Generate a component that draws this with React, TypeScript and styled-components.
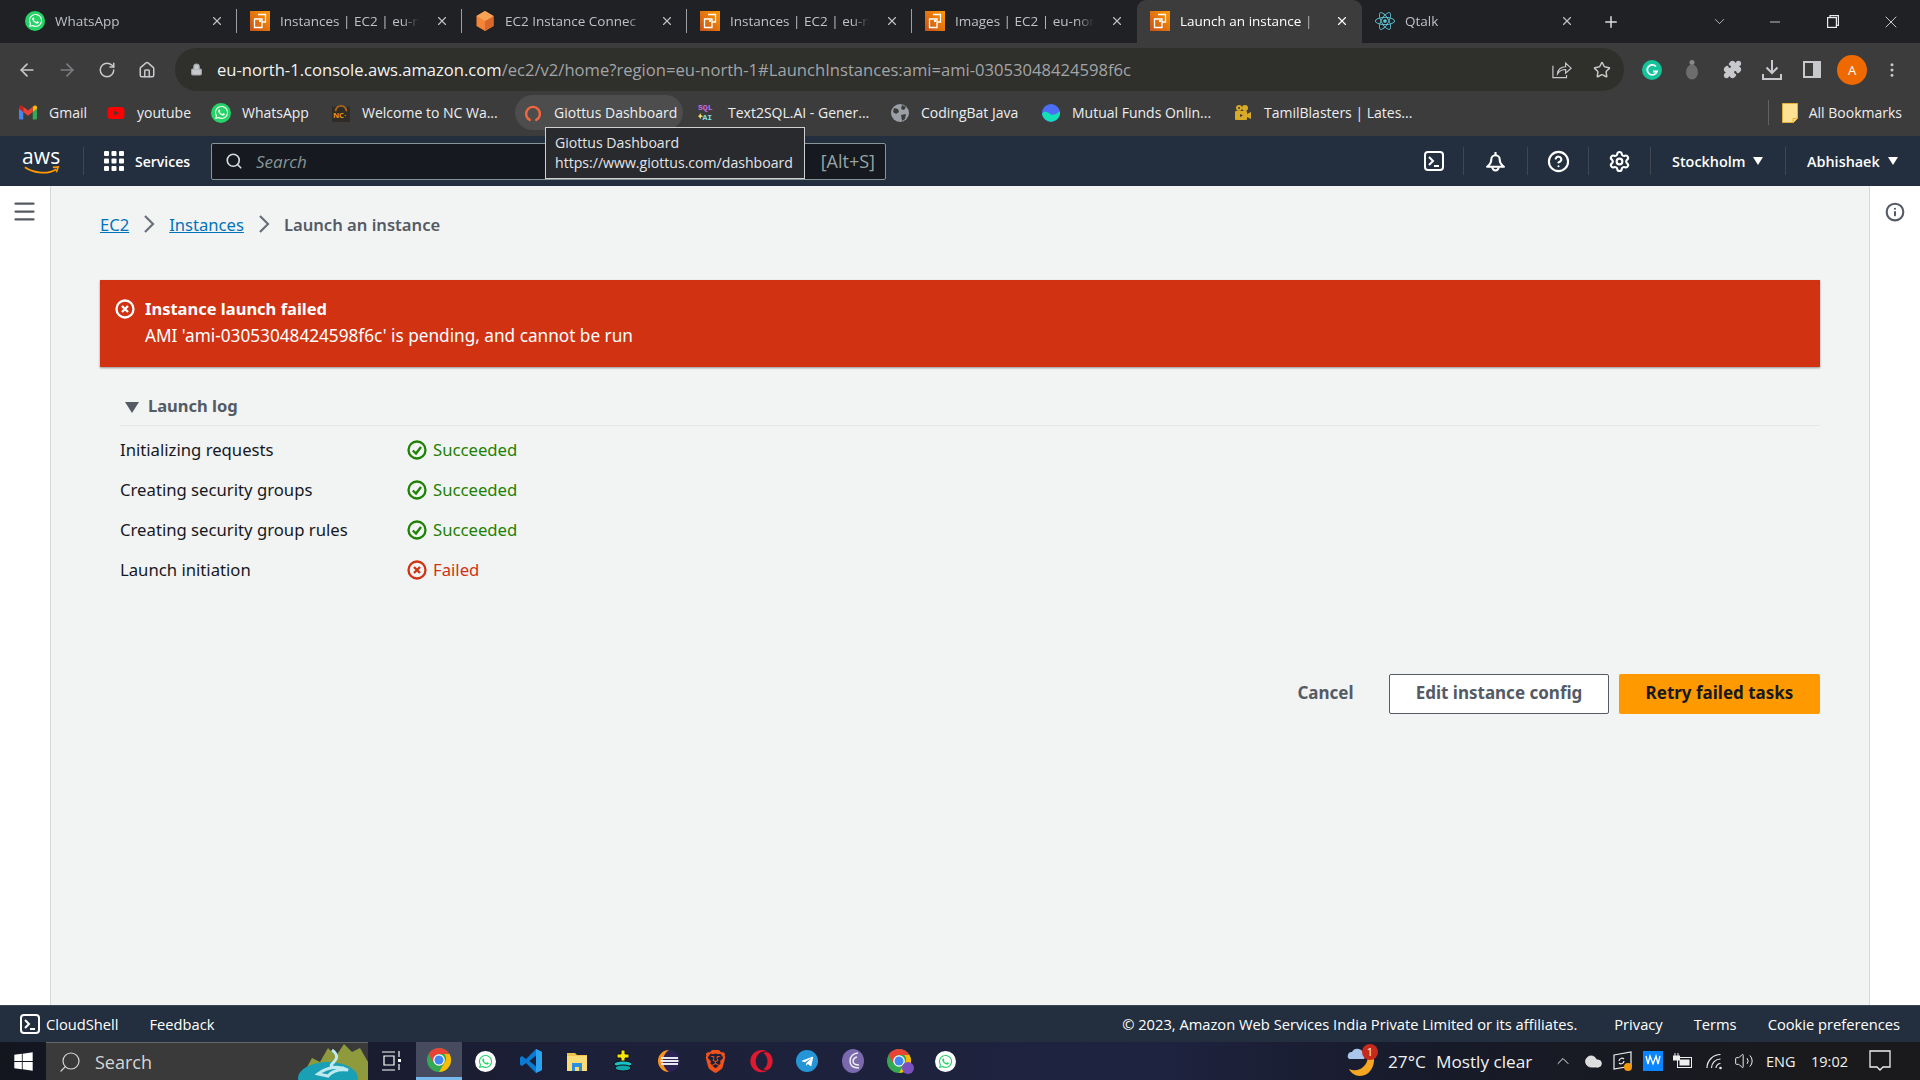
import React from 'react';
import styled, { createGlobalStyle } from 'styled-components';
import { ArrowLeft, ArrowRight, RotateCw, Home, Lock, Star, Puzzle, EllipsisVertical, Plus, X, ChevronDown, Minus, Search, CircleHelp, Settings, Menu, Info, ChevronUp, Volume2, Cloud } from 'lucide-react';
import { FaWhatsapp, FaReact, FaOpera, FaTelegramPlane, FaYoutube, FaWindows } from 'react-icons/fa';
import { SiBrave } from 'react-icons/si';

const GlobalStyle = createGlobalStyle`
  html, body { margin: 0; padding: 0; height: 100%; overflow: hidden; background: #f2f3f3; }
  * { box-sizing: border-box; }
  body { font-family: "Open Sans", "Liberation Sans", sans-serif; }
`;

const Screen = styled.div`
  width: 1920px;
  height: 1080px;
  display: flex;
  flex-direction: column;
  position: relative;
  overflow: hidden;
`;

/* browser chrome */
const TabStrip = styled.div`
  height: 43px;
  background: #202124;
  display: flex;
  align-items: stretch;
  padding-left: 12px;
  flex-shrink: 0;
`;

const Tab = styled.div<{ $active?: boolean; $last?: boolean }>`
  width: 225px;
  position: relative;
  display: flex;
  align-items: center;
  padding: 0 13px 2px 13px;
  gap: 10px;
  color: ${p => (p.$active ? '#fff' : '#bdc1c6')};
  background: ${p => (p.$active ? '#3c3c3c' : 'transparent')};
  border-radius: ${p => (p.$active ? '9px 9px 0 0' : '0')};
  font-size: 13.5px;
  svg { flex-shrink: 0; }
  &::after {
    content: '';
    display: ${p => (p.$active || p.$last ? 'none' : 'block')};
    position: absolute;
    right: 0;
    top: 9px;
    bottom: 10px;
    width: 1px;
    background: #9aa0a6;
  }
`;

const TabTitle = styled.span`
  flex: 1;
  white-space: nowrap;
  -webkit-mask-image: linear-gradient(90deg, #000 84%, transparent 96%);
  mask-image: linear-gradient(90deg, #000 84%, transparent 96%);
`;

const NewTab = styled.div`
  width: 48px;
  display: flex;
  align-items: center;
  justify-content: center;
  color: #dadce0;
`;

const WindowControls = styled.div`
  margin-left: auto;
  display: flex;
  align-items: center;
  color: #e8eaed;
`;

const WindowButton = styled.div<{ $w?: number }>`
  width: ${p => p.$w ?? 58}px;
  height: 100%;
  display: flex;
  align-items: center;
  justify-content: center;
`;

const Toolbar = styled.div`
  height: 48px;
  background: #3c3c3c;
  display: flex;
  align-items: flex-start;
  flex-shrink: 0;
  padding: 5px 0 0 7px;
`;

const ToolButton = styled.div<{ $dim?: boolean }>`
  width: 40px;
  height: 43px;
  display: flex;
  align-items: center;
  justify-content: center;
  flex-shrink: 0;
  color: ${p => (p.$dim ? '#7b7e82' : '#c7c9cc')};
`;

const Omnibox = styled.div`
  width: 1449px;
  margin-left: 8px;
  margin-right: 8px;
  height: 43px;
  border-radius: 22px;
  background: #2f2f2b;
  display: flex;
  align-items: center;
  padding: 0 2px 0 15px;
  font-size: 16.6px;
  color: #a2a5a8;
  white-space: nowrap;
`;

const UrlHost = styled.span`
  color: #f1f3f4;
`;

const UrlText = styled.div`
  margin-left: 14px;
  flex: 1;
`;

const Avatar = styled.div`
  width: 30px;
  height: 30px;
  border-radius: 50%;
  background: #ee6a00;
  color: #fff;
  font-size: 13px;
  display: flex;
  align-items: center;
  justify-content: center;
`;

const BookmarksBar = styled.div`
  height: 45px;
  background: #3c3c3c;
  display: flex;
  align-items: flex-start;
  padding: 4px 18px 0 10px;
  flex-shrink: 0;
`;

const Bookmark = styled.div<{ $w: number; $hover?: boolean }>`
  width: ${p => p.$w}px;
  height: 35px;
  display: flex;
  align-items: center;
  gap: 12px;
  padding-left: 9px;
  border-radius: 18px;
  color: #eceef0;
  font-size: 14px;
  white-space: nowrap;
  flex-shrink: 0;
  background: ${p => (p.$hover ? '#4d4d4d' : 'transparent')};
  margin-right: ${p => (p.$hover ? 6 : 0)}px;
`;

const BookmarkIcon = styled.span`
  width: 18px;
  display: flex;
  justify-content: center;
  flex-shrink: 0;
`;

const AllBookmarks = styled.div`
  margin: 5px 0 0 auto;
  height: 25px;
  display: flex;
  align-items: center;
  gap: 11px;
  padding-left: 13px;
  border-left: 1px solid #5f6368;
  color: #eceef0;
  font-size: 14px;
`;

const Tooltip = styled.div`
  position: absolute;
  left: 545px;
  top: 127px;
  width: 260px;
  height: 52px;
  background: #292a2d;
  border: 1px solid #cfd0d2;
  color: #e3e5e8;
  font-size: 14.1px;
  line-height: 20px;
  padding: 5px 0 0 9px;
  white-space: nowrap;
  z-index: 5;
`;

/* aws console header */
const ConsoleNav = styled.div`
  height: 50px;
  background: #232f3e;
  display: flex;
  align-items: center;
  color: #fff;
  flex-shrink: 0;
`;

const LogoBox = styled.div`
  width: 84px;
  height: 28px;
  padding-left: 22px;
  border-right: 1px solid #414750;
  display: flex;
  flex-direction: column;
`;

const LogoWord = styled.span`
  font-size: 21px;
  line-height: 19px;
  height: 19px;
  letter-spacing: 0.2px;
`;

const ServicesButton = styled.div`
  width: 127px;
  display: flex;
  align-items: center;
  gap: 11px;
  padding-left: 20px;
  font-size: 14px;
  font-weight: 600;
`;

const SearchBox = styled.div`
  width: 675px;
  height: 37px;
  background: #16191f;
  border: 1px solid #879596;
  border-radius: 2px;
  display: flex;
  align-items: center;
  padding: 0 10px 0 13px;
  gap: 13px;
`;

const SearchPlaceholder = styled.span`
  font-style: italic;
  color: #879596;
  font-size: 17px;
  flex: 1;
`;

const ShortcutHint = styled.span`
  color: #95a5a6;
  font-size: 18px;
`;

const NavRight = styled.div`
  margin-left: auto;
  display: flex;
  align-items: center;
`;

const NavItem = styled.div<{ $w: number; $start?: boolean }>`
  width: ${p => p.$w}px;
  height: 28px;
  display: flex;
  align-items: center;
  justify-content: ${p => (p.$start ? 'flex-start' : 'center')};
  padding-left: ${p => (p.$start ? 21 : 0)}px;
  gap: 8px;
  font-size: 14.4px;
  font-weight: 600;
  border-right: 1px solid #414750;
  &:last-child { border-right: none; }
`;

const Caret = styled.span`
  width: 0;
  height: 0;
  border-left: 5px solid transparent;
  border-right: 5px solid transparent;
  border-top: 8px solid #fff;
`;

/* page */
const Main = styled.div`
  flex: 1;
  display: flex;
  min-height: 0;
`;

const SideRail = styled.div<{ $right?: boolean }>`
  width: 51px;
  background: #fff;
  ${p => (p.$right ? 'border-left' : 'border-right')}: 1px solid #d5dbdb;
  display: flex;
  justify-content: center;
  padding-top: 16px;
  padding-right: 1px;
  color: #545b64;
`;

const Hamburger = styled(Menu)`
  margin-top: -4px;
`;

const Content = styled.div`
  flex: 1;
  background: #f2f3f3;
  padding: 27px 49px 0 49px;
  font-family: "Noto Sans", "Open Sans", sans-serif;
`;

const Breadcrumbs = styled.div`
  height: 22px;
  display: flex;
  align-items: center;
  gap: 14px;
  font-size: 16.6px;
  color: #545b64;
`;

const Crumb = styled.a`
  color: #0073bb;
  text-decoration: underline;
`;

const CurrentCrumb = styled.span`
  font-weight: 600;
`;

const Alert = styled.div`
  margin-top: 45px;
  height: 87px;
  background: #d13212;
  color: #fff;
  padding: 15px 0 0 15px;
  display: flex;
  gap: 10px;
  box-shadow: 0 1px 2px rgba(0, 0, 0, 0.4);
  font-size: 17.2px;
  line-height: 27px;
`;

const AlertIcon = styled.div`
  padding-top: 4px;
  line-height: 0;
`;

const AlertTitle = styled.div`
  font-size: 16.5px;
  font-weight: 700;
`;

const LogSection = styled.div`
  margin-top: 26px;
  padding-left: 20px;
`;

const LogHeader = styled.div`
  height: 33px;
  display: flex;
  align-items: flex-start;
  gap: 9px;
  padding-left: 5px;
  border-bottom: 1px solid #e5e8e8;
  font-size: 16.5px;
  font-weight: 700;
  line-height: 26px;
  color: #545b64;
`;

const LogCaret = styled.span`
  margin-top: 9px;
  width: 0;
  height: 0;
  border-left: 7px solid transparent;
  border-right: 7px solid transparent;
  border-top: 11px solid #545b64;
`;

const LogRows = styled.div`
  margin-top: 3px;
`;

const LogRow = styled.div`
  height: 40px;
  display: flex;
  align-items: center;
  font-size: 16.7px;
  color: #16191f;
`;

const LogLabel = styled.span`
  width: 287px;
`;

const LogStatus = styled.span<{ $failed?: boolean }>`
  display: flex;
  align-items: center;
  gap: 6px;
  color: ${p => (p.$failed ? '#d13212' : '#1d8102')};
  svg { margin-top: 2px; }
`;

const Actions = styled.div`
  margin-top: 85px;
  display: flex;
  justify-content: flex-end;
  align-items: center;
  gap: 10px;
`;

const ActionButton = styled.button<{ $kind: 'link' | 'normal' | 'primary' }>`
  height: 40px;
  width: ${p => (p.$kind === 'primary' ? 201 : p.$kind === 'normal' ? 220 : 59)}px;
  margin-right: ${p => (p.$kind === 'link' ? 24 : 0)}px;
  padding: 0 0 3px;
  font-family: inherit;
  font-size: 17px;
  font-weight: 700;
  border-radius: 2px;
  white-space: nowrap;
  border: ${p => (p.$kind === 'normal' ? '1px solid #545b64' : 'none')};
  background: ${p => (p.$kind === 'primary' ? '#ff9900' : p.$kind === 'normal' ? '#fff' : 'transparent')};
  color: ${p => (p.$kind === 'primary' ? '#16191f' : '#545b64')};
`;

const Footer = styled.div`
  height: 37px;
  background: #232f3e;
  color: #fff;
  border-top: 1px solid #3b4654;
  display: flex;
  align-items: center;
  padding: 0 20px;
  font-size: 14.7px;
  font-weight: 500;
  flex-shrink: 0;
  white-space: nowrap;
`;

const FooterTool = styled.span`
  display: flex;
  align-items: center;
  gap: 6px;
  margin-right: 31px;
`;

const FooterLinks = styled.div`
  margin-left: auto;
  display: flex;
  gap: 31px;
`;

const FooterCopy = styled.span`
  margin-right: 6px;
`;

/* windows taskbar */
const Taskbar = styled.div`
  height: 38px;
  background: linear-gradient(90deg, #13161f 0%, #1c2038 30%, #1e2340 60%, #171a28 75%, #1a1a1c 95%);
  display: flex;
  align-items: stretch;
  color: #fff;
  flex-shrink: 0;
`;

const StartButton = styled.div`
  width: 46px;
  display: flex;
  align-items: center;
  justify-content: center;
`;

const TaskSearch = styled.div`
  width: 322px;
  background: #3a3a3a;
  border-top: 1px solid #666;
  display: flex;
  align-items: center;
  gap: 13px;
  padding-left: 12px;
  font-size: 18px;
  color: #d6d6d6;
  position: relative;
  overflow: hidden;
`;

const MirroredSearch = styled(Search)`
  transform: scaleX(-1);
`;

const SearchArt = styled.svg`
  position: absolute;
  right: 0;
  bottom: 0;
`;

const AppSlot = styled.div<{ $active?: boolean; $w?: number }>`
  width: ${p => p.$w ?? 46}px;
  display: flex;
  align-items: center;
  justify-content: center;
  background: ${p => (p.$active ? '#474b60' : 'transparent')};
  border-bottom: ${p => (p.$active ? '3px solid #76b9ed' : 'none')};
`;

const Tray = styled.div`
  margin-left: auto;
  padding-right: 20px;
  display: flex;
  align-items: center;
  color: #f1f1f1;
`;

const TrayText = styled.span<{ $w: number; $small?: boolean; $pad?: number }>`
  width: ${p => p.$w}px;
  padding-left: ${p => p.$pad ?? 0}px;
  font-size: ${p => (p.$small ? 14.5 : 17.2)}px;
  white-space: nowrap;
`;

const TraySlot = styled.div<{ $w?: number }>`
  width: ${p => p.$w ?? 30}px;
  display: flex;
  justify-content: center;
  align-items: center;
  color: #eee;
`;

const RoundBrand = styled.span<{ $size: number; $bg: string; $fg: string }>`
  width: ${p => p.$size}px;
  height: ${p => p.$size}px;
  border-radius: 50%;
  background: ${p => p.$bg};
  color: ${p => p.$fg};
  display: inline-flex;
  align-items: center;
  justify-content: center;
  flex-shrink: 0;
`;

const IconStack = styled.span`
  position: relative;
  display: inline-flex;
`;

const ProfileDot = styled.svg`
  position: absolute;
  right: -3px;
  bottom: -1px;
`;

const Badge = styled.span`
  position: absolute;
  right: -2px;
  top: -1px;
  width: 16px;
  height: 16px;
  border-radius: 50%;
  background: #c42b1c;
  font-size: 11px;
  line-height: 16px;
  text-align: center;
  color: #fff;
`;

/* icons drawn by hand */
const AwsFavicon = () => (
  <svg width="20" height="20" viewBox="0 0 20 20">
    <defs>
      <linearGradient id="awsf" x1="0" y1="1" x2="1" y2="0">
        <stop offset="0" stopColor="#c8511b" />
        <stop offset="1" stopColor="#ff9900" />
      </linearGradient>
    </defs>
    <rect width="20" height="20" fill="url(#awsf)" />
    <path d="M8 3.500h7.500V11H12M4.500 8H12v8.500H4.500z" fill="none" stroke="#fff" strokeWidth="1.300" />
    <rect x="9" y="9" width="2" height="2" fill="#fff" />
  </svg>
);

const CubeFavicon = () => (
  <svg width="20" height="20" viewBox="0 0 20 20">
    <path d="M10 0l8.500 5v10L10 20l-8.500-5V5z" fill="#f58536" />
    <path d="M10 10l8.500-5v10L10 20z" fill="#d9672a" />
    <path d="M10 0l8.500 5L10 10 1.500 5z" fill="#f9a356" />
  </svg>
);

const ChromeLogo = ({ size = 24 }: { size?: number }) => (
  <svg width={size} height={size} viewBox="0 0 24 24">
    <circle cx="12" cy="12" r="12" fill="#34a853" />
    <path d="M12 0a12 12 0 0 1 10.400 6H12a6 6 0 0 0-5.200 3L3.500 3.500A12 12 0 0 1 12 0z" fill="#ea4335" />
    <path d="M22.400 6A12 12 0 0 1 12 24l5.200-9a6 6 0 0 0 0-9z" fill="#fbbc04" />
    <path d="M3.500 3.500 12 12 6.800 15 1.600 6z" fill="#ea4335" />
    <circle cx="12" cy="12" r="5.800" fill="#fff" />
    <circle cx="12" cy="12" r="4.500" fill="#4285f4" />
  </svg>
);

const GmailLogo = () => (
  <svg width="19" height="15" viewBox="0 0 19 15">
    <path d="M0 3v10.500C0 14.300.7 15 1.500 15H4.500V7z" fill="#4285f4" />
    <path d="M19 3v10.500c0 .8-.7 1.500-1.500 1.500h-3V7z" fill="#34a853" />
    <path d="M14.500 1.500V7L19 3.500V2c0-1.800-2-2.500-3-1.500z" fill="#fbbc04" />
    <path d="M4.500 7V1.500l5 4 5-4V7l-5 4z" fill="#ea4335" />
    <path d="M0 2v1.500L4.500 7V1.500L3 .5C2-.5 0 .2 0 2z" fill="#c5221f" />
  </svg>
);

const NcFavicon = () => (
  <svg width="20" height="20" viewBox="0 0 20 20">
    <rect y="3" width="20" height="17" fill="#2f2b26" />
    <path d="M4 8a6 6 0 0 1 12 0" fill="none" stroke="#a8671a" strokeWidth="2" />
    <text x="1" y="16" fontSize="8.500" fontWeight="700" fontFamily="Open Sans" fill="#e8960f">NC·</text>
  </svg>
);

const GiottusLogo = () => (
  <svg width="22" height="22" viewBox="0 0 22 22">
    <path d="M7 19.500a8.500 8.500 0 1 1 8 0" fill="none" stroke="#f0663e" strokeWidth="3" strokeLinecap="round" />
  </svg>
);

const SqlFavicon = () => (
  <svg width="20" height="24" viewBox="0 0 20 24">
    <text x="0" y="9" fontSize="9" fontWeight="700" fontFamily="Liberation Mono" fill="#c86ae8">SQL</text>
    <text x="5" y="20" fontSize="9" fontWeight="700" fontFamily="Liberation Mono" fill="#7fe3e8">AI</text>
    <path d="M2.500 12l1 2.500 2.500 1-2.500 1-1 2.500-1-2.500-2-1 2-1z" fill="#f4e06a" />
  </svg>
);

const GlobeGlyph = () => (
  <svg width="18" height="18" viewBox="0 0 18 18">
    <circle cx="9" cy="9" r="9" fill="#9aa0a6" />
    <path d="M3 4l4 1 1 3-3 2-3-2zM11 1l4 2-2 3-3-1zM10 11l5-1-1 5-3 2z" fill="#3c3c3c" />
  </svg>
);

const WaveFavicon = () => (
  <svg width="20" height="20" viewBox="0 0 20 20">
    <circle cx="10" cy="10" r="10" fill="#4c6ef5" />
    <path d="M0 11c3-4 6-2 9 0s6 1 11-3a10 10 0 0 1-20 3z" fill="#14e0b5" />
  </svg>
);

const CameraFavicon = () => (
  <svg width="18" height="18" viewBox="0 0 18 18" fill="#d9a928">
    <circle cx="5" cy="4" r="3" />
    <circle cx="11" cy="4" r="3" />
    <rect x="1" y="7" width="12" height="9" rx="1" />
    <path d="M13 10l4-2v7l-4-2z" />
    <circle cx="5" cy="4" r="1" fill="#3c3c3c" />
    <path d="M6 10l3 1.500L6 13z" fill="#3c3c3c" />
  </svg>
);

const FolderIcon = () => (
  <svg width="16" height="20" viewBox="0 0 16 20">
    <path d="M.5.5h15v15l-4 4H.5z" fill="#fde293" stroke="#e3b23c" />
    <path d="M11 19.500v-4h4.500" fill="none" stroke="#e3b23c" />
  </svg>
);

const Grammarly = () => (
  <svg width="20" height="20" viewBox="0 0 20 20">
    <circle cx="10" cy="10" r="10" fill="#15c39a" />
    <path d="M14 6.500a5 5 0 1 0 1 5H11" fill="none" stroke="#fff" strokeWidth="1.800" />
  </svg>
);

const BugIcon = () => (
  <svg width="12" height="20" viewBox="0 0 12 20">
    <circle cx="6" cy="2.500" r="2.500" fill="#8a8a8a" />
    <ellipse cx="6" cy="12" rx="6" ry="7.500" fill="#6d6d6d" />
  </svg>
);

const SidePanel = () => (
  <svg width="18" height="17" viewBox="0 0 18 17">
    <path d="M0 0h18v17H0z" fill="#c7c9cc" />
    <rect x="2" y="2" width="8" height="13" fill="#3c3c3c" />
  </svg>
);

const DownloadIcon = () => (
  <svg width="20" height="20" viewBox="0 0 20 20" fill="none" stroke="#c7c9cc" strokeWidth="2">
    <path d="M10 0v12M4.500 7.500 10 13l5.500-5.500M1 14v5h18v-5" />
  </svg>
);

const ShareGlyph = () => (
  <svg width="20" height="19" viewBox="0 0 22 20" fill="none" stroke="#c7c9cc" strokeWidth="1.300">
    <path d="M1 6v13h15v-3" />
    <path d="M6 15c0-5 4-8 9-8V3l6 5.500-6 5.500v-4c-4 0-7 1.500-9 5z" />
  </svg>
);

const ConsoleGlyph = ({ size = 20 }: { size?: number }) => (
  <svg width={size} height={size} viewBox="0 0 20 20" fill="none" stroke="#fff" strokeWidth="2">
    <rect x="1" y="1" width="18" height="18" rx="3" />
    <path d="M5 6l4 4-4 4M10 15h5" />
  </svg>
);

const BellGlyph = () => (
  <svg width="21" height="21" viewBox="0 0 20 20" fill="none" stroke="#fff" strokeWidth="2">
    <path d="M2 15c2.500-2 4-3.500 4-7a4 4 0 0 1 8 0c0 3.500 1.500 5 4 7z" strokeLinejoin="round" />
    <path d="M10 1v3M7 15.500a3 3 0 0 0 6 0" />
  </svg>
);

const GridGlyph = () => (
  <svg width="20" height="20" viewBox="0 0 20 20" fill="#fff">
    {[0, 7.5, 15].flatMap(x => [0, 7.5, 15].map(y => <rect key={`${x}-${y}`} x={x} y={y} width="5" height="5" rx="1" />))}
  </svg>
);

const Smile = () => (
  <svg width="40" height="10" viewBox="0 0 40 10" fill="none">
    <path d="M1 1.500c10 7 26 8 35 2" stroke="#ff9900" strokeWidth="2" />
    <path d="M32 1.500l6-.5-2 6" stroke="#ff9900" strokeWidth="1.800" />
  </svg>
);

const CrumbChevron = () => (
  <svg width="12" height="18" viewBox="0 0 12 18" fill="none" stroke="#687078" strokeWidth="2.200">
    <path d="M2 1l8 8-8 8" />
  </svg>
);

const StatusCheck = () => (
  <svg width="20" height="20" viewBox="0 0 20 20" fill="none" stroke="#1d8102" strokeWidth="2.300">
    <circle cx="10" cy="10" r="8.500" />
    <path d="M5.800 10.500 9 13.500l5-6.500" />
  </svg>
);

const StatusCross = ({ color, size = 20 }: { color: string; size?: number }) => (
  <svg width={size} height={size} viewBox="0 0 20 20" fill="none" stroke={color} strokeWidth="2.300">
    <circle cx="10" cy="10" r="8.500" />
    <path d="M7 7l6 6M13 7l-6 6" />
  </svg>
);

const RestoreGlyph = () => (
  <svg width="12" height="13" viewBox="0 0 12 13" fill="none" stroke="#e8eaed" strokeWidth="1.200">
    <rect x=".6" y="2.600" width="8.800" height="9.800" />
    <path d="M3 2.600V.6h8.400v9.800H9.400" />
  </svg>
);

const TaskViewGlyph = () => (
  <svg width="20" height="20" viewBox="0 0 20 20" fill="none" stroke="#fff" strokeWidth="1.200">
    <path d="M0 1h13M0 19h13M2 5h10v9H2zM17 0v6M17 13v6" />
    <rect x="16" y="8" width="3" height="3" fill="#fff" stroke="none" />
  </svg>
);

const VsCodeGlyph = () => (
  <svg width="22" height="24" viewBox="0 0 22 24">
    <path d="M16 0l6 3v18l-6 3L6 14l-4 3-2-1.500V8.500L2 7l4 3z" fill="#0b7ad1" />
    <path d="M16 6.500 9.500 12l6.500 5.500z" fill="#1c2038" />
    <path d="M16 0l6 3v18l-6 3z" fill="#2ba3ee" />
  </svg>
);

const FilesGlyph = () => (
  <svg width="20" height="20" viewBox="0 0 20 20">
    <path d="M0 2h8l2 2h10v16H0z" fill="#f0c14b" />
    <rect y="5" width="20" height="15" fill="#fbdc77" />
    <path d="M5 12h10v8h-3v-4H8v4H5z" fill="#2a8fdc" />
  </svg>
);

const PlusStackGlyph = () => (
  <svg width="20" height="24" viewBox="0 0 20 24">
    <path d="M8 1h4v4h4v4h-4v4H8V9H4V5h4z" fill="#f7e600" stroke="#111" />
    <ellipse cx="10" cy="15" rx="9" ry="3" fill="#17c3c9" stroke="#111" />
    <ellipse cx="10" cy="19" rx="8" ry="3" fill="#12a7ad" stroke="#111" />
  </svg>
);

const EclipseGlyph = () => (
  <svg width="22" height="22" viewBox="0 0 22 22">
    <circle cx="11" cy="11" r="11" fill="#2c2255" />
    <path d="M11 0a11 11 0 0 0 0 22 13 13 0 0 1 0-22z" fill="#f7941e" />
    <path d="M3 8h17M2.500 11h18M3 14h17" stroke="#e8e8f0" strokeWidth="2" />
  </svg>
);

const TorrentGlyph = () => (
  <svg width="22" height="24" viewBox="0 0 22 24">
    <ellipse cx="11" cy="12" rx="11" ry="12" fill="#7b69ae" />
    <path d="M16 4a8 8 0 0 0-8 8c0 4 3 7 9 7M15 8a5 5 0 0 0-4 4c0 2.500 2 4 6 4" fill="none" stroke="#eee" strokeWidth="1.500" />
  </svg>
);

const ChromeProfileGlyph = () => (
  <IconStack>
    <ChromeLogo size={24} />
    <ProfileDot width="12" height="12" viewBox="0 0 12 12">
      <circle cx="6" cy="6" r="6" fill="#7b4fc0" />
    </ProfileDot>
  </IconStack>
);

const WeatherGlyph = () => (
  <IconStack>
    <svg width="30" height="32" viewBox="0 0 30 32">
      <path d="M28 12c1 10-5 19-14 19-5 0-9-3-11-7 9 4 18-2 19-12z" fill="#f5a623" />
      <path d="M3 14a4 4 0 0 1 3-7 6 6 0 0 1 11 1 3.500 3.500 0 0 1 1 6z" fill="#a9c6ea" />
    </svg>
    <Badge>1</Badge>
  </IconStack>
);

const OneDriveUpdate = () => (
  <svg width="20" height="20" viewBox="0 0 20 20" fill="none" stroke="#eee" strokeWidth="1.200">
    <path d="M1 4l17-3v14L1 18z" />
    <path d="M6 10a3 3 0 0 1 5-2M11 10a3 3 0 0 1-5 2" />
    <circle cx="15" cy="16" r="4" fill="#f59a0b" stroke="none" />
  </svg>
);

const WavesGlyph = () => (
  <svg width="20" height="20" viewBox="0 0 20 20">
    <rect width="20" height="20" fill="#0a84ff" />
    <path d="M3 5l2 8 2-8 3 8 3-8 2 8 2-8" fill="none" stroke="#fff" strokeWidth="1.300" />
  </svg>
);

const BatteryGlyph = () => (
  <svg width="20" height="16" viewBox="0 0 20 16" fill="none" stroke="#eee">
    <path d="M2 0v3M5 0v3" />
    <rect x=".5" y="3" width="6" height="4" fill="#eee" />
    <rect x="4.500" y="4.500" width="14" height="10" />
    <rect x="6.500" y="6.500" width="10" height="6" fill="#eee" stroke="none" />
  </svg>
);

const WifiGlyph = () => (
  <svg width="20" height="20" viewBox="0 0 20 20" fill="none" stroke="#eee" strokeWidth="1.200">
    <path d="M12 17A4.500 4.500 0 0 1 16.500 12.500M7.500 17a9 9 0 0 1 9-9M3 17A13.500 13.500 0 0 1 16.500 3.500" />
    <circle cx="16.500" cy="17" r="1.300" fill="#eee" stroke="none" />
  </svg>
);

const NotificationGlyph = () => (
  <svg width="22" height="22" viewBox="0 0 22 22" fill="none" stroke="#eee" strokeWidth="1.300">
    <path d="M1 1h20v16h-7l-3 3-3-3H1z" />
  </svg>
);

const LandscapeArt = () => (
  <SearchArt width="72" height="38" viewBox="0 0 72 38">
    <path d="M4 38 16 16l8 4 8-14 8 8 8-12 8 8 8-4 8 14v18z" fill="#8f9a3c" />
    <ellipse cx="32" cy="36" rx="30" ry="16" fill="#1aa0b5" />
    <path d="M22 32c10-8 22-8 30-4-8-1-16 1-20 6zM36 8c8 6 4 10 0 14s8 4 12 4" fill="none" stroke="#bfe9ef" strokeWidth="3" />
  </SearchArt>
);

const AwsTab = <AwsFavicon />;

const tabs: { title: string; icon: React.ReactNode; active?: boolean }[] = [
  { title: 'WhatsApp', icon: <RoundBrand $size={20} $bg="#25d366" $fg="#fff"><FaWhatsapp size={15} /></RoundBrand> },
  { title: 'Instances | EC2 | eu-n', icon: AwsTab },
  { title: 'EC2 Instance Connec', icon: <CubeFavicon /> },
  { title: 'Instances | EC2 | eu-n', icon: AwsTab },
  { title: 'Images | EC2 | eu-nor', icon: AwsTab },
  { title: 'Launch an instance |', icon: AwsTab, active: true },
  { title: 'Qtalk', icon: <FaReact size={20} color="#5ec5d8" /> },
];

const bookmarks: { label: string; icon: React.ReactNode; w: number; hover?: boolean }[] = [
  { label: 'Gmail', icon: <GmailLogo />, w: 88 },
  { label: 'youtube', icon: <FaYoutube size={20} color="#f00" />, w: 105 },
  { label: 'WhatsApp', icon: <RoundBrand $size={20} $bg="#25d366" $fg="#fff"><FaWhatsapp size={15} /></RoundBrand>, w: 120 },
  { label: 'Welcome to NC Wa...', icon: <NcFavicon />, w: 192 },
  { label: 'Giottus Dashboard', icon: <GiottusLogo />, w: 168, hover: true },
  { label: 'Text2SQL.AI - Gener...', icon: <SqlFavicon />, w: 193 },
  { label: 'CodingBat Java', icon: <GlobeGlyph />, w: 151 },
  { label: 'Mutual Funds Onlin...', icon: <WaveFavicon />, w: 192 },
  { label: 'TamilBlasters | Lates...', icon: <CameraFavicon />, w: 180 },
];

const logRows = [
  { label: 'Initializing requests', failed: false },
  { label: 'Creating security groups', failed: false },
  { label: 'Creating security group rules', failed: false },
  { label: 'Launch initiation', failed: true },
];

const taskApps: React.ReactNode[] = [
  <RoundBrand $size={21} $bg="#fff" $fg="#25d366"><FaWhatsapp size={15} /></RoundBrand>,
  <VsCodeGlyph />,
  <FilesGlyph />,
  <PlusStackGlyph />,
  <EclipseGlyph />,
  <SiBrave size={23} color="#f1511b" />,
  <FaOpera size={23} color="#e0192f" />,
  <RoundBrand $size={22} $bg="#2496d8" $fg="#fff"><FaTelegramPlane size={13} /></RoundBrand>,
  <TorrentGlyph />,
  <ChromeProfileGlyph />,
  <RoundBrand $size={21} $bg="#fff" $fg="#25d366"><FaWhatsapp size={15} /></RoundBrand>,
];

export default function App() {
  return (
    <Screen>
      <GlobalStyle />
      <TabStrip>
        {tabs.map((t, i) => (
          <Tab key={i} $active={t.active} $last={i === 4 || i === 6}>
            {t.icon}
            <TabTitle>{t.title}</TabTitle>
            <X size={14} strokeWidth={2} />
          </Tab>
        ))}
        <NewTab><Plus size={18} strokeWidth={2} /></NewTab>
        <WindowControls>
          <WindowButton $w={54}><ChevronDown size={17} strokeWidth={1} /></WindowButton>
          <WindowButton><Minus size={16} strokeWidth={1.2} /></WindowButton>
          <WindowButton><RestoreGlyph /></WindowButton>
          <WindowButton><X size={20} strokeWidth={1} /></WindowButton>
        </WindowControls>
      </TabStrip>

      <Toolbar>
        <ToolButton><ArrowLeft size={20} /></ToolButton>
        <ToolButton $dim><ArrowRight size={20} /></ToolButton>
        <ToolButton><RotateCw size={18} /></ToolButton>
        <ToolButton><Home size={18} /></ToolButton>
        <Omnibox>
          <Lock size={13} fill="#c7c9cc" />
          <UrlText>
            <UrlHost>eu-north-1.console.aws.amazon.com</UrlHost>/ec2/v2/home?region=eu-north-1#LaunchInstances:ami=ami-03053048424598f6c
          </UrlText>
          <ToolButton><ShareGlyph /></ToolButton>
          <ToolButton><Star size={18} /></ToolButton>
        </Omnibox>
        <ToolButton><Grammarly /></ToolButton>
        <ToolButton><BugIcon /></ToolButton>
        <ToolButton><Puzzle size={19} fill="#c7c9cc" /></ToolButton>
        <ToolButton><DownloadIcon /></ToolButton>
        <ToolButton><SidePanel /></ToolButton>
        <ToolButton><Avatar>A</Avatar></ToolButton>
        <ToolButton><EllipsisVertical size={18} /></ToolButton>
      </Toolbar>

      <BookmarksBar>
        {bookmarks.map(b => (
          <Bookmark key={b.label} $w={b.w} $hover={b.hover}>
            <BookmarkIcon>{b.icon}</BookmarkIcon>
            <span>{b.label}</span>
          </Bookmark>
        ))}
        <AllBookmarks><FolderIcon />All Bookmarks</AllBookmarks>
      </BookmarksBar>

      <Tooltip>
        Giottus Dashboard
        <br />
        https://www.giottus.com/dashboard
      </Tooltip>

      <ConsoleNav>
        <LogoBox>
          <LogoWord>aws</LogoWord>
          <Smile />
        </LogoBox>
        <ServicesButton><GridGlyph />Services</ServicesButton>
        <SearchBox>
          <Search size={18} color="#d5dbdb" strokeWidth={2.2} />
          <SearchPlaceholder>Search</SearchPlaceholder>
          <ShortcutHint>[Alt+S]</ShortcutHint>
        </SearchBox>
        <NavRight>
          <NavItem $w={60}><ConsoleGlyph /></NavItem>
          <NavItem $w={64}><BellGlyph /></NavItem>
          <NavItem $w={61}><CircleHelp size={23} strokeWidth={2.2} /></NavItem>
          <NavItem $w={62}><Settings size={23} strokeWidth={2.2} /></NavItem>
          <NavItem $w={135} $start>Stockholm<Caret /></NavItem>
          <NavItem $w={134} $start>Abhishaek<Caret /></NavItem>
        </NavRight>
      </ConsoleNav>

      <Main>
        <SideRail><Hamburger size={27} strokeWidth={2} /></SideRail>
        <Content>
          <Breadcrumbs>
            <Crumb>EC2</Crumb>
            <CrumbChevron />
            <Crumb>Instances</Crumb>
            <CrumbChevron />
            <CurrentCrumb>Launch an instance</CurrentCrumb>
          </Breadcrumbs>

          <Alert>
            <AlertIcon><StatusCross color="#fff" /></AlertIcon>
            <div>
              <AlertTitle>Instance launch failed</AlertTitle>
              <div>AMI 'ami-03053048424598f6c' is pending, and cannot be run</div>
            </div>
          </Alert>

          <LogSection>
            <LogHeader><LogCaret />Launch log</LogHeader>
            <LogRows>
              {logRows.map(r => (
                <LogRow key={r.label}>
                  <LogLabel>{r.label}</LogLabel>
                  <LogStatus $failed={r.failed}>
                    {r.failed ? <StatusCross color="#d13212" /> : <StatusCheck />}
                    {r.failed ? 'Failed' : 'Succeeded'}
                  </LogStatus>
                </LogRow>
              ))}
            </LogRows>
          </LogSection>

          <Actions>
            <ActionButton $kind="link">Cancel</ActionButton>
            <ActionButton $kind="normal">Edit instance config</ActionButton>
            <ActionButton $kind="primary">Retry failed tasks</ActionButton>
          </Actions>
        </Content>
        <SideRail $right><Info size={20} strokeWidth={2.5} /></SideRail>
      </Main>

      <Footer>
        <FooterTool><ConsoleGlyph />CloudShell</FooterTool>
        <span>Feedback</span>
        <FooterLinks>
          <FooterCopy>© 2023, Amazon Web Services India Private Limited or its affiliates.</FooterCopy>
          <span>Privacy</span>
          <span>Terms</span>
          <span>Cookie preferences</span>
        </FooterLinks>
      </Footer>

      <Taskbar>
        <StartButton><FaWindows size={21} /></StartButton>
        <TaskSearch>
          <MirroredSearch size={24} strokeWidth={1.2} />
          Search
          <LandscapeArt />
        </TaskSearch>
        <AppSlot $w={48}><TaskViewGlyph /></AppSlot>
        <AppSlot $active><ChromeLogo /></AppSlot>
        {taskApps.map((a, i) => <AppSlot key={i}>{a}</AppSlot>)}
        <Tray>
          <TraySlot $w={54}><WeatherGlyph /></TraySlot>
          <TrayText $w={48}>27°C</TrayText>
          <TrayText $w={111}>Mostly clear</TrayText>
          <TraySlot $w={31}><ChevronUp size={20} strokeWidth={1.2} /></TraySlot>
          <TraySlot><Cloud size={19} fill="#ddd" strokeWidth={1} /></TraySlot>
          <TraySlot><OneDriveUpdate /></TraySlot>
          <TraySlot><WavesGlyph /></TraySlot>
          <TraySlot><BatteryGlyph /></TraySlot>
          <TraySlot $w={32}><WifiGlyph /></TraySlot>
          <TraySlot $w={28}><Volume2 size={20} strokeWidth={1.2} /></TraySlot>
          <TrayText $w={42} $small $pad={8}>ENG</TrayText>
          <TrayText $w={60} $small $pad={11}>19:02</TrayText>
          <TraySlot $w={40}><NotificationGlyph /></TraySlot>
        </Tray>
      </Taskbar>
    </Screen>
  );
}
